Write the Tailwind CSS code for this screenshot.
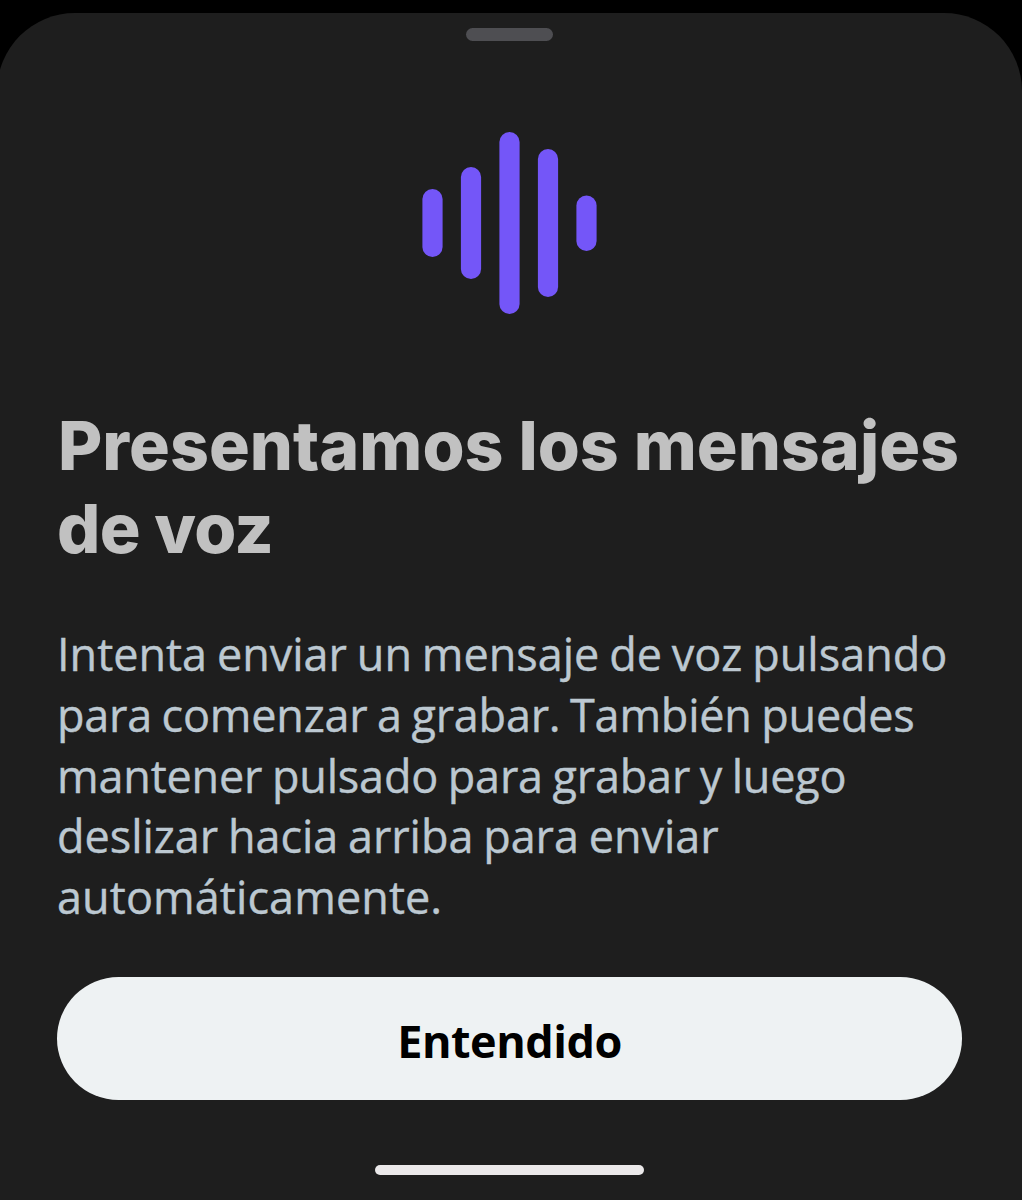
<!DOCTYPE html>
<html lang="es">
<head>
  <meta charset="UTF-8">
  <meta name="viewport" content="width=device-width, initial-scale=1.0">
  <title>Mensajes de voz</title>
  <script src="https://cdn.jsdelivr.net/npm/@tailwindcss/browser@4"></script>
</head>
<body class="bg-black overflow-hidden font-['Open_Sans',sans-serif]">
  <!-- Bottom sheet -->
  <main class="mt-[13px] -ml-[3px] w-[1025px] h-[1187px] pl-[60px] pr-[60px] bg-[#1e1e1e] rounded-t-[78px] flex flex-col">
    <div class="mt-[15px] ml-[409px] w-[87px] h-[13px] shrink-0 rounded-full bg-[#4e4e52]"></div>

    <!-- Voice wave icon -->
    <svg class="mt-[91px] ml-[365px] w-[175px] h-[183px] shrink-0" viewBox="0 0 175 183" fill="#7456f8">
      <rect x="0.4" y="57" width="20.2" height="68" rx="10.1"/>
      <rect x="38.9" y="35" width="20.2" height="112" rx="10.1"/>
      <rect x="77.4" y="0" width="20.2" height="182" rx="10.1"/>
      <rect x="115.9" y="17" width="20.2" height="148" rx="10.1"/>
      <rect x="154.4" y="63.5" width="20.2" height="55.5" rx="10.1"/>
    </svg>

    <h1 class="mt-[89px] text-[68px] leading-[83px] font-extrabold text-[#c1c1c1] whitespace-nowrap font-[Inter,sans-serif]">
      <span class="block pl-px tracking-[0.02px]">Presentamos los mensajes</span>
      <span class="block tracking-[-0.6px]">de voz</span>
    </h1>

    <p class="mt-[54px] text-[45px] leading-[60.8px] text-[#bcc8d1] whitespace-nowrap [word-spacing:-1.9px] [-webkit-text-stroke:0.4px_currentColor]">
      <span class="block">Intenta enviar un mensaje de voz pulsando</span>
      <span class="block tracking-[-0.22px]">para comenzar a grabar. También puedes</span>
      <span class="block tracking-[-0.19px]">mantener pulsado para grabar y luego</span>
      <span class="block tracking-[-0.04px]">deslizar hacia arriba para enviar</span>
      <span class="block tracking-[0.08px]">automáticamente.</span>
    </p>

    <button class="mt-[49px] h-[123px] w-[905px] pt-[5px] shrink-0 rounded-full bg-[#eef2f3] text-black text-[45px] font-bold tracking-[-0.5px]">Entendido</button>

    <!-- Home indicator -->
    <div class="mt-[65px] ml-[318px] w-[269px] h-[10px] shrink-0 rounded-full bg-[#ebe9ea]"></div>
  </main>
</body>
</html>
